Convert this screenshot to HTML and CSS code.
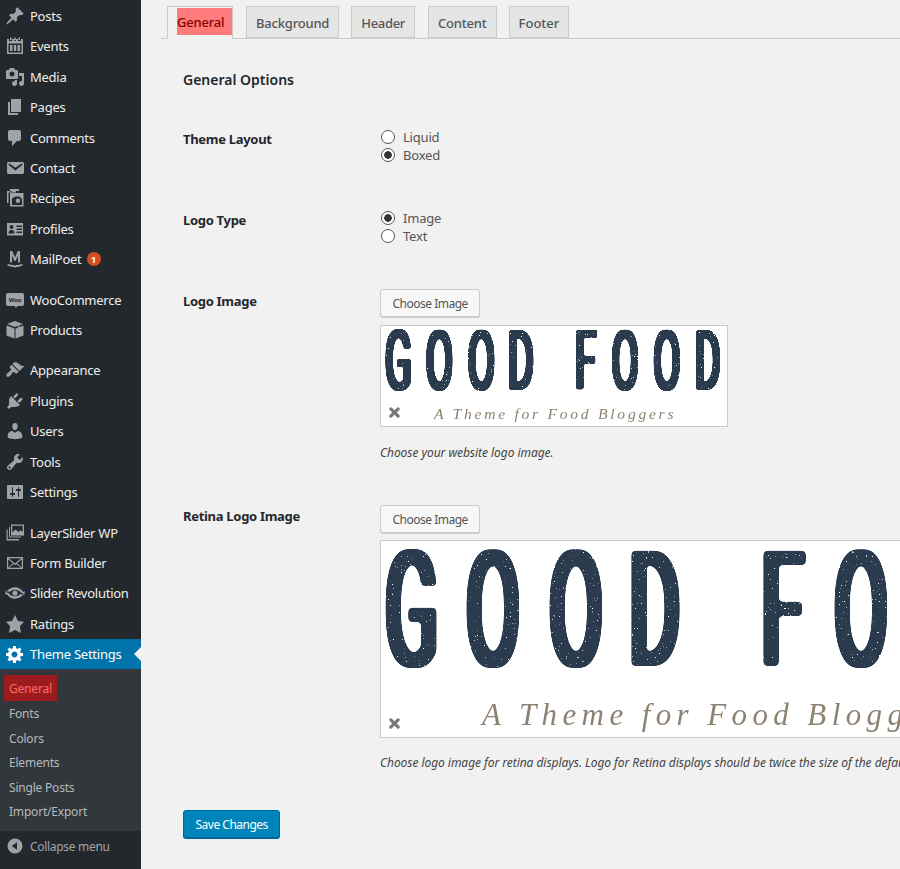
FILE: index.html
```html
<!DOCTYPE html>
<html lang="en">
<head>
  <meta charset="UTF-8">
  <meta name="viewport" content="width=device-width, initial-scale=1.0">
  <title>Theme Settings</title>
  <link rel="stylesheet" href="styles.css">
</head>
<body>
  <svg class="defs" width="0" height="0">
    <!-- thickens the squeezed logo letters, rounds their corners, adds the print speckle -->
    <filter id="logo-ink" filterUnits="userSpaceOnUse" x="0" y="0" width="682" height="197">
      <feMorphology in="SourceGraphic" operator="dilate" radius="3.6 1"/>
      <feGaussianBlur stdDeviation="2.2"/>
      <feComponentTransfer result="ink"><feFuncA type="linear" slope="9" intercept="-4"/></feComponentTransfer>
      <feTurbulence type="fractalNoise" baseFrequency=".55" numOctaves="2" seed="4"/>
      <feColorMatrix type="matrix" values="0 0 0 0 0  0 0 0 0 0  0 0 0 0 0  0 0 0 14 -2.9" result="holes"/>
      <feComposite in="ink" in2="holes" operator="in"/>
    </filter>
    <symbol id="i-posts" viewBox="0 0 20 20"><path d="M10.44 3.02l1.82-1.82 6.36 6.35-1.83 1.82c-1.05-.68-2.48-.57-3.41.36l-.75.75c-.92.93-1.04 2.35-.35 3.41l-1.83 1.82-2.41-2.41-2.8 2.79c-.42.42-3.38 2.71-3.8 2.29s1.86-3.39 2.28-3.81l2.79-2.79L4.1 9.36l1.83-1.82c1.05.69 2.48.57 3.4-.36l.75-.75c.93-.92 1.05-2.35.36-3.41z"/></symbol>
    <symbol id="i-events" viewBox="0 0 20 20"><path fill-rule="evenodd" d="M5 1.500h1.500V4H5zM9.250 1.500h1.500V4h-1.500zM13.500 1.500H15V4h-1.500zM2 3h2v2h3V3h2.200v2h1.600V3H13v2h3V3h2v15H2zM3.500 7.500v9h13v-9zM5 9h2.500v6H5zM8.800 9h2.400v6H8.800zM12.500 9H15v6h-2.500z"/></symbol>
    <symbol id="i-media" viewBox="0 0 20 20"><path d="M13 11V4c0-.55-.45-1-1-1h-1.670L9 1H5L3.670 3H2c-.55 0-1 .45-1 1v7c0 .55.45 1 1 1h10c.55 0 1-.45 1-1zM7 4.500c1.380 0 2.500 1.120 2.500 2.500S8.380 9.500 7 9.500 4.500 8.380 4.500 7 5.620 4.500 7 4.500zM14 6h5v10.500c0 1.380-1.120 2.500-2.500 2.500S14 17.880 14 16.500s1.120-2.500 2.500-2.500c.17 0 .34.02.5.05V9h-3V6zm-4 8.050V13h2v3.500c0 1.380-1.120 2.500-2.500 2.500S7 17.880 7 16.500 8.120 14 9.500 14c.17 0 .34.02.5.05z" fill-rule="evenodd"/></symbol>
    <symbol id="i-pages" viewBox="0 0 20 20"><path d="M6 15V2h10v13H6zm-1 1h8v2H3V5h2v11z"/></symbol>
    <symbol id="i-comments" viewBox="0 0 20 20"><path d="M5 2h9c1.100 0 2 .9 2 2v7c0 1.100-.9 2-2 2h-2l-5 5v-5H5c-1.100 0-2-.9-2-2V4c0-1.100.9-2 2-2z"/></symbol>
    <symbol id="i-contact" viewBox="0 0 20 20"><path d="M3.870 4h13.250C18.370 4 19 4.590 19 5.790v8.420c0 1.190-.63 1.790-1.880 1.790H3.870c-1.250 0-1.880-.6-1.880-1.790V5.790c0-1.200.63-1.790 1.880-1.790zm6.620 8.600l6.740-5.530c.24-.2.43-.66.13-1.070-.29-.41-.82-.42-1.170-.17l-5.700 3.860L4.800 5.830c-.35-.25-.88-.24-1.170.17-.3.41-.11.870.13 1.070z"/></symbol>
    <symbol id="i-recipes" viewBox="0 0 20 20"><path fill-rule="evenodd" d="M2 3h9v1.500H3.500V15H2zM5 1h9v2H6.500v1H5zM5 5h13.500v13.500H5zM7 10.500V17h10v-5.500l-2.500-3h-4zM13 10.500a2.300 2.300 0 1 0 0 4.600 2.300 2.300 0 0 0 0-4.600z"/></symbol>
    <symbol id="i-profiles" viewBox="0 0 20 20"><path fill-rule="evenodd" d="M2 4h16v12.500H2zM6.500 6a2 2 0 1 0 0 4 2 2 0 0 0 0-4zM3.500 14.500h6c0-2.200-1-3.500-3-3.500s-3 1.300-3 3.500zM11.500 6.500v1.500H17V6.500zM11.500 9.500V11H17V9.500zM11.500 12.500V14H17v-1.500z"/></symbol>
    <symbol id="i-mailpoet" viewBox="0 0 20 20"><path d="M5 2h2.200L10 8.500 12.800 2H15v11.500h-2V6.500L10.600 12H9.400L7 6.500v7H5zM2.500 15c2 .5 5 1 6.500 1l1 1 1-1c1.500 0 4.500-.5 6.500-1v1.500c-1.500.8-4 1.500-6.300 1.500L10 19l-.7-1C7 18 4 17.300 2.500 16.500z"/></symbol>
    <symbol id="i-products" viewBox="0 0 20 20"><path d="M10 1l8 3-8 3-8-3zM1.500 5.500l8 3v10l-8-3zM18.500 5.500v10l-8 3v-10z"/><path d="M5 3.300l8 3.200v2l2-.8v-2l-8-3.200z" opacity=".55"/></symbol>
    <symbol id="i-appearance" viewBox="0 0 20 20"><path d="M14.480 11.060L7.410 3.990l1.500-1.500c.5-.56 2.300-.47 3.510.32 1.210.8 1.430 1.280 2.910 2.100 1.180.64 2.450 1.260 4.450.85zm-.71.71L6.700 4.700 4.930 6.470c-.39.39-.39 1.020 0 1.410l1.060 1.060c.39.39.39 1.030 0 1.420-.6.6-1.430 1.110-2.210 1.690-.35.26-.7.53-1.010.84C1.430 13.230 1 15.700 1.800 16.500c.8.8 2.270.37 3.610-.97.31-.31.58-.66.84-1.010.58-.78 1.090-1.610 1.690-2.210.39-.39 1.030-.39 1.420 0l1.060 1.060c.39.39 1.020.39 1.410 0z"/></symbol>
    <symbol id="i-plugins" viewBox="0 0 20 20"><path d="M13.110 4.360L9.870 7.600 8 5.730l3.240-3.240c.35-.34 1.050-.2 1.560.32.52.51.66 1.210.31 1.550zm-8 1.770l.91-1.120 9.010 9.010-1.190.84c-.71.71-2.630 1.160-3.820 1.160H6.140L4.900 17.260c-.59.59-1.540.59-2.120 0a1.490 1.490 0 0 1 0-2.120l1.240-1.240v-3.880c0-1.130.4-3.190 1.090-3.890zm7.260 3.970l3.240-3.240c.34-.35 1.040-.21 1.550.31.52.51.66 1.210.31 1.550l-3.240 3.250z"/></symbol>
    <symbol id="i-users" viewBox="0 0 20 20"><path d="M10 9.250c-2.270 0-2.730-3.440-2.730-3.440C7 4.020 7.820 2 9.970 2c2.160 0 2.980 2.020 2.710 3.810 0 0-.41 3.440-2.680 3.440zm0 2.570L12.720 10c2.390 0 4.520 2.330 4.520 4.530v2.490s-3.650 1.130-7.240 1.130c-3.650 0-7.240-1.130-7.240-1.130v-2.490c0-2.250 1.940-4.480 4.470-4.480z"/></symbol>
    <symbol id="i-tools" viewBox="0 0 20 20"><path d="M16.680 9.770c-1.340 1.340-3.300 1.670-4.950.99l-5.410 6.520c-.99.99-2.590.99-3.580 0s-.99-2.590 0-3.570l6.520-5.420c-.68-1.650-.35-3.610.99-4.950 1.280-1.280 3.120-1.620 4.720-1.060l-2.890 2.890 2.820 2.820 2.860-2.870c.53 1.580.18 3.390-1.080 4.650zM3.810 16.210c.4.39 1.040.39 1.430 0 .4-.4.4-1.040 0-1.430-.39-.4-1.030-.4-1.430 0-.39.39-.39 1.030 0 1.430z"/></symbol>
    <symbol id="i-settings" viewBox="0 0 20 20"><path d="M18 16V4c0-.55-.45-1-1-1H3c-.55 0-1 .45-1 1v12c0 .55.45 1 1 1h14c.55 0 1-.45 1-1zM8 11h1c.55 0 1 .45 1 1s-.45 1-1 1H8v1.500c0 .28-.22.5-.5.5s-.5-.22-.5-.5V13H6c-.55 0-1-.45-1-1s.45-1 1-1h1V5.500c0-.28.22-.5.5-.5s.5.22.5.5V11zm5-2h-1c-.55 0-1-.45-1-1s.45-1 1-1h1V5.500c0-.28.22-.5.5-.5s.5.22.5.5V7h1c.55 0 1 .45 1 1s-.45 1-1 1h-1v5.500c0 .28-.22.5-.5.5s-.5-.22-.5-.5V9z"/></symbol>
    <symbol id="i-layers" viewBox="0 0 20 20"><path fill-rule="evenodd" d="M6 1.500h13v11H6zM7.300 2.800v6.600l3.200-3 3 2.600 2-1.700 2.200 1.800V2.800zM4 4h1v9.500h11v1H4zM1.500 6.500h1.200V16H14v1.500H1.500z"/></symbol>
    <symbol id="i-formbuilder" viewBox="0 0 20 20"><path fill-rule="evenodd" d="M2 4h16v12H2zM3.800 5.200 10 10.600l6.200-5.400zM3.200 6.200v8.300L8 10.300zM16.800 6.200 12 10.300l4.800 4.200zM4 14.800h12l-4.800-3.700L10 12.200l-1.200-1.100z"/></symbol>
    <symbol id="i-revslider" viewBox="0 0 20 20"><path fill-rule="evenodd" d="M10 4.200c3.300 0 6.300 2 8.300 4.800L20 8.300l-.8 4-3.900-1.200 1.300-.8C15 8 12.600 6.700 10 6.700S5 8 3.400 10.300L1.200 8.900C3.300 6 6.600 4.200 10 4.200zM10 15.800c-3.300 0-6.300-2-8.300-4.800L0 11.700l.8-4 3.900 1.200-1.300.8C5 12 7.400 13.300 10 13.300s5-1.300 6.600-3.600l2.200 1.400C16.700 14 13.400 15.800 10 15.800z"/><circle cx="10" cy="10" r="2.600"/></symbol>
    <symbol id="i-star" viewBox="0 0 20 20"><path d="M10 1l3 6 6 .75-4.120 4.620L16 19l-6-3-6 3 1.130-6.630L1 7.750l6-.75z"/></symbol>
    <symbol id="i-gear" viewBox="0 0 20 20"><path fill-rule="evenodd" d="M18 12h-2.180c-.17.7-.44 1.350-.81 1.930l1.540 1.540-2.100 2.100-1.540-1.540c-.58.36-1.230.63-1.910.79V19H8v-2.180c-.68-.16-1.330-.43-1.910-.79l-1.540 1.540-2.120-2.120 1.540-1.540c-.36-.58-.63-1.230-.79-1.910H1V9.030h2.170c.16-.7.44-1.350.8-1.940L2.430 5.550l2.100-2.100 1.540 1.540c.58-.37 1.240-.64 1.930-.81V2h3v2.180c.68.16 1.330.43 1.910.79l1.540-1.540 2.120 2.120-1.540 1.540c.36.59.64 1.240.8 1.940H18V12zm-8.500 1.500c1.660 0 3-1.340 3-3s-1.340-3-3-3-3 1.340-3 3 1.340 3 3 3z"/></symbol>
    <symbol id="i-collapse" viewBox="0 0 20 20"><path fill-rule="evenodd" d="M10 2.500a7.500 7.500 0 1 1 0 15 7.500 7.500 0 0 1 0-15zM12 6.200 6.800 10l5.200 3.800z"/></symbol>
    <symbol id="i-remove" viewBox="0 0 12 12"><path d="M2 2l8 8M10 2l-8 8" fill="none" stroke="#777" stroke-width="3.400" stroke-linecap="round"/></symbol>
  </svg>

  <div class="admin">
    <nav class="sidebar">
      <ul class="menu">
        <li class="item"><svg class="icon"><use href="#i-posts"/></svg>Posts</li>
        <li class="item"><svg class="icon"><use href="#i-events"/></svg>Events</li>
        <li class="item"><svg class="icon"><use href="#i-media"/></svg>Media</li>
        <li class="item"><svg class="icon"><use href="#i-pages"/></svg>Pages</li>
        <li class="item"><svg class="icon"><use href="#i-comments"/></svg>Comments</li>
        <li class="item"><svg class="icon"><use href="#i-contact"/></svg>Contact</li>
        <li class="item"><svg class="icon"><use href="#i-recipes"/></svg>Recipes</li>
        <li class="item"><svg class="icon"><use href="#i-profiles"/></svg>Profiles</li>
        <li class="item"><svg class="icon"><use href="#i-mailpoet"/></svg>MailPoet<span class="badge">1</span></li>
        <li class="sep"></li>
        <li class="item">
          <svg class="icon" viewBox="0 0 20 20"><rect x="1" y="3" width="18" height="13" rx="2"/><path d="M9 15h4l-2 3z"/><text class="woo-text" x="10" y="12" text-anchor="middle">Woo</text></svg>WooCommerce
        </li>
        <li class="item"><svg class="icon"><use href="#i-products"/></svg>Products</li>
        <li class="sep"></li>
        <li class="item"><svg class="icon"><use href="#i-appearance"/></svg>Appearance</li>
        <li class="item"><svg class="icon"><use href="#i-plugins"/></svg>Plugins</li>
        <li class="item"><svg class="icon"><use href="#i-users"/></svg>Users</li>
        <li class="item"><svg class="icon"><use href="#i-tools"/></svg>Tools</li>
        <li class="item"><svg class="icon"><use href="#i-settings"/></svg>Settings</li>
        <li class="sep"></li>
        <li class="item"><svg class="icon"><use href="#i-layers"/></svg>LayerSlider WP</li>
        <li class="item"><svg class="icon"><use href="#i-formbuilder"/></svg>Form Builder</li>
        <li class="item"><svg class="icon"><use href="#i-revslider"/></svg>Slider Revolution</li>
        <li class="item"><svg class="icon"><use href="#i-star"/></svg>Ratings</li>
        <li class="item current"><svg class="icon"><use href="#i-gear"/></svg>Theme Settings</li>
      </ul>
      <ul class="submenu">
        <li class="sub-item"><span class="sub-active">General</span></li>
        <li class="sub-item">Fonts</li>
        <li class="sub-item">Colors</li>
        <li class="sub-item">Elements</li>
        <li class="sub-item">Single Posts</li>
        <li class="sub-item">Import/Export</li>
      </ul>
      <div class="collapse"><svg class="icon"><use href="#i-collapse"/></svg>Collapse menu</div>
    </nav>

    <main class="content">
      <div class="tabs">
        <a class="tab tab-active"><span class="tab-mark">General</span></a>
        <a class="tab tab-bg">Background</a>
        <a class="tab tab-header">Header</a>
        <a class="tab tab-content">Content</a>
        <a class="tab tab-footer">Footer</a>
      </div>

      <h2 class="title">General Options</h2>

      <div class="row row-layout">
        <div class="label">Theme Layout</div>
        <div class="field">
          <label class="radio"><input type="radio" name="layout">Liquid</label>
          <label class="radio"><input type="radio" name="layout" checked>Boxed</label>
        </div>
      </div>

      <div class="row row-type">
        <div class="label">Logo Type</div>
        <div class="field">
          <label class="radio"><input type="radio" name="logotype" checked>Image</label>
          <label class="radio"><input type="radio" name="logotype">Text</label>
        </div>
      </div>

      <div class="row row-logo">
        <div class="label">Logo Image</div>
        <div class="field">
          <button class="btn">Choose Image</button>
          <div class="preview preview-small">
            <svg class="logo" viewBox="0 0 682 197">
              <g class="logo-letters" filter="url(#logo-ink)">
                <text transform="translate(4 124) scale(.78 1.6)">G</text>
                <text transform="translate(85 124) scale(.78 1.6)">O</text>
                <text transform="translate(168 124) scale(.78 1.6)">O</text>
                <text transform="translate(248 124) scale(.78 1.6)">D</text>
                <text transform="translate(380 124) scale(.78 1.6)">F</text>
                <text transform="translate(453 124) scale(.78 1.6)">O</text>
                <text transform="translate(536 124) scale(.78 1.6)">O</text>
                <text transform="translate(618 124) scale(.78 1.6)">D</text>
              </g>
              <text class="logo-tag" x="101" y="184" textLength="475">A Theme for Food Bloggers</text>
            </svg>
            <svg class="remove"><use href="#i-remove"/></svg>
          </div>
          <p class="desc">Choose your website logo image.</p>
        </div>
      </div>

      <div class="row row-retina">
        <div class="label">Retina Logo Image</div>
        <div class="field">
          <button class="btn">Choose Image</button>
          <div class="preview preview-large">
            <svg class="logo" viewBox="0 0 682 197">
              <g class="logo-letters" filter="url(#logo-ink)">
                <text transform="translate(4 124) scale(.78 1.6)">G</text>
                <text transform="translate(85 124) scale(.78 1.6)">O</text>
                <text transform="translate(168 124) scale(.78 1.6)">O</text>
                <text transform="translate(248 124) scale(.78 1.6)">D</text>
                <text transform="translate(380 124) scale(.78 1.6)">F</text>
                <text transform="translate(453 124) scale(.78 1.6)">O</text>
                <text transform="translate(536 124) scale(.78 1.6)">O</text>
                <text transform="translate(618 124) scale(.78 1.6)">D</text>
              </g>
              <text class="logo-tag" x="101" y="184" textLength="475">A Theme for Food Bloggers</text>
            </svg>
            <svg class="remove"><use href="#i-remove"/></svg>
          </div>
          <p class="desc desc-retina">Choose logo image for retina displays. Logo for Retina displays should be twice the size of the default one.</p>
        </div>
      </div>

      <button class="btn btn-primary">Save Changes</button>
    </main>
  </div>
</body>
</html>
```

FILE: styles.css
```css
* {
  box-sizing: border-box;
}

html, body {
  height: 100%;
}

body {
  margin: 0;
  background: #f1f1f1;
  color: #444;
  font-family: "Noto Sans", "Open Sans", sans-serif;
  font-size: 13px;
  overflow: hidden;
}

.defs {
  position: absolute;
}

ul {
  list-style: none;
  margin: 0;
  padding: 0;
}

.admin {
  display: flex;
  height: 869px;
  overflow: hidden;
}

/* left menu */
.sidebar {
  width: 141px;
  flex: none;
  padding-top: 0.8px;
  background: #23282d;
  color: #eee;
}

.item {
  display: flex;
  align-items: center;
  height: 30.4px;
  padding-left: 5px;
  gap: 5px;
  white-space: nowrap;
  letter-spacing: -0.25px;
}

.sep {
  height: 10.1px;
}

.icon {
  width: 20px;
  height: 20px;
  flex: none;
  fill: #9ea3a8;
}

.woo-text {
  font-size: 6px;
  font-weight: 700;
  fill: #23282d;
}

.badge {
  display: inline-flex;
  align-items: center;
  justify-content: center;
  width: 14px;
  height: 14px;
  border-radius: 50%;
  background: #d54e21;
  color: #fff;
  font-size: 9px;
  font-weight: 700;
  letter-spacing: 0;
}

.current {
  position: relative;
  background: #0073aa;
  color: #fff;
}

.current .icon {
  fill: #fff;
}

.current::after {
  content: "";
  position: absolute;
  right: 0;
  top: 8px;
  border: 7px solid transparent;
  border-left-width: 0;
  border-right-color: #f1f1f1;
}

.submenu {
  background: #32373c;
  padding: 7.5px 0 7px;
  color: #b4b9be;
  font-size: 12px;
  letter-spacing: -0.2px;
}

.sub-item {
  display: flex;
  align-items: center;
  height: 24.5px;
  padding-left: 9px;
}

.sub-active {
  margin: 0 0 3px -5px;
  padding: 0 5px;
  width: 53px;
  height: 26px;
  line-height: 28px;
  background: #9b1c1f;
  color: #ff6a6a;
}

.collapse {
  display: flex;
  align-items: center;
  gap: 5px;
  height: 31px;
  padding-left: 5px;
  color: #a0a5aa;
  font-size: 12px;
  letter-spacing: -0.3px;
}

/* main column */
.content {
  flex: 1;
  min-width: 0;
  padding: 7px 0 0 20px;
}

.tabs {
  display: flex;
  align-items: flex-end;
  height: 32px;
  padding-left: 6px;
  border-bottom: 1px solid #ccc;
}

.tab {
  display: block;
  height: 32px;
  line-height: 32px;
  padding: 0 9px;
  border: 1px solid #ccc;
  background: #e5e5e5;
  color: #555;
  font-weight: 500;
  letter-spacing: -0.2px;
  white-space: nowrap;
}

.tab-bg { margin-left: 13px; }
.tab-header { margin-left: 12px; letter-spacing: -0.3px; }
.tab-content { margin-left: 13px; }
.tab-footer { margin-left: 12px; letter-spacing: 0; }

.tab-active {
  width: 66px;
  height: 33px;
  margin-bottom: -1px;
  padding: 1px 0 0 9px;
  background: #f1f1f1;
  border-bottom-color: #f1f1f1;
}

.tab-mark {
  display: block;
  height: 27px;
  line-height: 29px;
  width: 55px;
  background: #ff7b7b;
  color: #8b0000;
}

.title {
  margin: 31px 0 0 22px;
  height: 20px;
  font-size: 14px;
  line-height: 20px;
  font-weight: 600;
  color: #23282d;
}

.row {
  display: flex;
  margin-left: 22px;
}

.row-layout { margin-top: 38px; }
.row-type { margin-top: 45px; }
.row-logo { margin-top: 44px; }
.row-retina { margin-top: 43px; }

.label {
  width: 197px;
  flex: none;
  padding-top: 1px;
  line-height: 20px;
  font-weight: 700;
  color: #23282d;
  letter-spacing: -0.3px;
}

.row-logo .label {
  padding-top: 2px;
}

.field {
  min-width: 0;
  flex: 1;
}

.radio {
  display: flex;
  align-items: center;
  height: 18px;
  color: #555;
  letter-spacing: -0.2px;
}

.radio input {
  appearance: none;
  width: 14px;
  height: 14px;
  margin: 0 8px 0 1px;
  border: 1px solid #555;
  border-radius: 50%;
  background: #fff;
}

.radio input:checked {
  background: radial-gradient(circle, #333 0 3.5px, #fff 4px);
}

.btn {
  display: block;
  height: 28px;
  padding: 0 11.5px;
  border: 1px solid #ccc;
  border-radius: 3px;
  background: #f7f7f7;
  box-shadow: 0 1px 0 #ccc;
  color: #555;
  font: inherit;
  font-size: 12px;
  letter-spacing: -0.5px;
}

.preview {
  position: relative;
  margin-top: 8px;
  border: 1px solid #ccc;
  background: #fff;
  overflow: hidden;
}

.preview-small {
  width: 348px;
  height: 102px;
  padding-left: 2px;
}

.preview-small .logo {
  width: 344px;
  height: 100px;
}

.preview-large {
  width: 684px;
  height: 198px;
  margin-top: 7px;
}

.preview-large .logo {
  width: 682px;
  height: 197px;
}

.logo {
  display: block;
}

.logo-letters text {
  font-family: Roboto, sans-serif;
  font-size: 100px;
  fill: #2b3a4d;
}

.logo-tag {
  font-family: "Liberation Serif", serif;
  font-style: italic;
  font-size: 31px;
  fill: #8d8272;
}

.remove {
  position: absolute;
  left: 8px;
  bottom: 8px;
  width: 11px;
  height: 11px;
}

.desc {
  margin: 17px 0 0;
  line-height: 18px;
  font-size: 12px;
  font-style: italic;
  color: #444;
  white-space: nowrap;
  letter-spacing: -0.05px;
}

.desc-retina {
  margin-top: 16px;
}

.btn-primary {
  margin: 38px 0 0 22px;
  background: #0085ba;
  border-color: #006799;
  box-shadow: 0 1px 0 #006799;
  color: #fff;
}
```
